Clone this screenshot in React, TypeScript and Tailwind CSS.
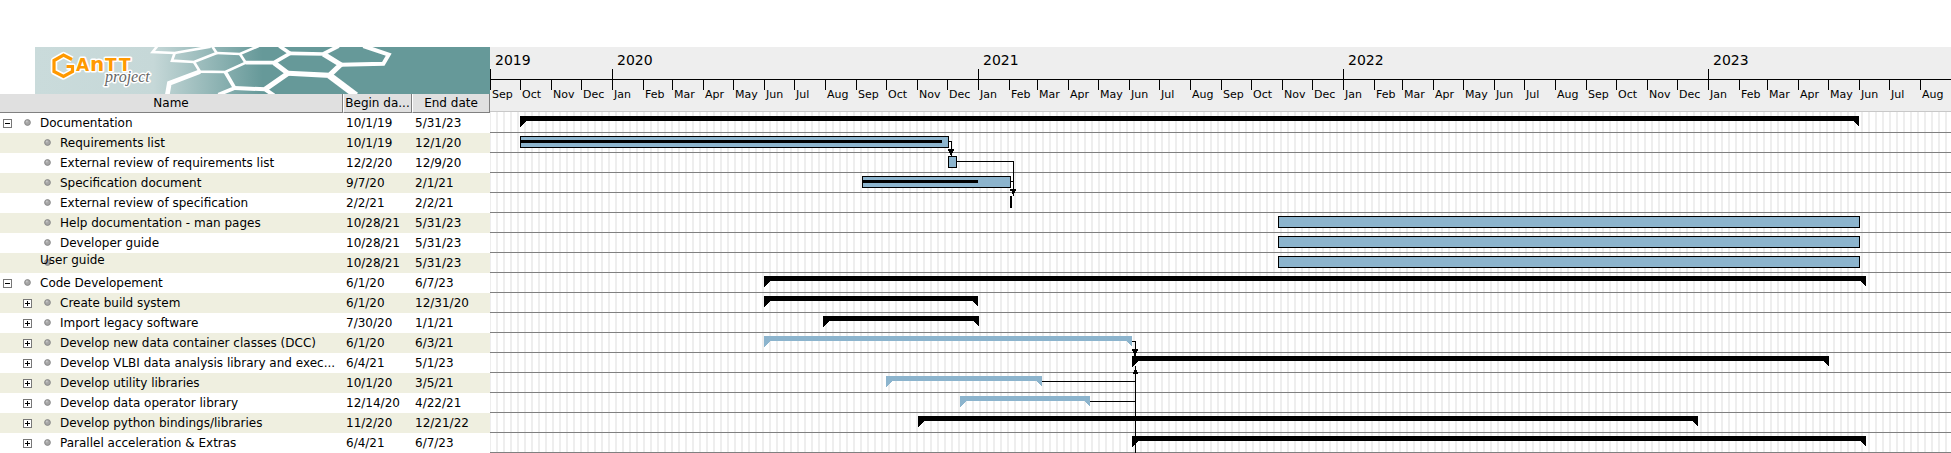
import React from "react";

const DAY = 86400000;
const START = Date.UTC(2019, 8, 1);
const MONTHS = ["Jan", "Feb", "Mar", "Apr", "May", "Jun", "Jul", "Aug", "Sep", "Oct", "Nov", "Dec"];
const ROW = 20;

type Kind = "summary" | "open" | "task";
type Task = {
  name: string;
  begin: string;
  end: string;
  level: 0 | 1;
  kind: Kind;
  expander?: "-" | "+";
  done?: number;
  editing?: boolean;
};

const TASKS: Task[] = [
  { name: "Documentation", begin: "10/1/19", end: "5/31/23", level: 0, kind: "summary", expander: "-" },
  { name: "Requirements list", begin: "10/1/19", end: "12/1/20", level: 1, kind: "task", done: 422 },
  { name: "External review of requirements list", begin: "12/2/20", end: "12/9/20", level: 1, kind: "task" },
  { name: "Specification document", begin: "9/7/20", end: "2/1/21", level: 1, kind: "task", done: 116 },
  { name: "External review of specification", begin: "2/2/21", end: "2/2/21", level: 1, kind: "task" },
  { name: "Help documentation - man pages", begin: "10/28/21", end: "5/31/23", level: 1, kind: "task" },
  { name: "Developer guide", begin: "10/28/21", end: "5/31/23", level: 1, kind: "task" },
  { name: "User guide", begin: "10/28/21", end: "5/31/23", level: 1, kind: "task", editing: true },
  { name: "Code Developement", begin: "6/1/20", end: "6/7/23", level: 0, kind: "summary", expander: "-" },
  { name: "Create build system", begin: "6/1/20", end: "12/31/20", level: 1, kind: "summary", expander: "+" },
  { name: "Import legacy software", begin: "7/30/20", end: "1/1/21", level: 1, kind: "summary", expander: "+" },
  { name: "Develop new data container classes (DCC)", begin: "6/1/20", end: "6/3/21", level: 1, kind: "open", expander: "+" },
  { name: "Develop VLBI data analysis library and exec...", begin: "6/4/21", end: "5/1/23", level: 1, kind: "summary", expander: "+" },
  { name: "Develop utility libraries", begin: "10/1/20", end: "3/5/21", level: 1, kind: "open", expander: "+" },
  { name: "Develop data operator library", begin: "12/14/20", end: "4/22/21", level: 1, kind: "open", expander: "+" },
  { name: "Develop python bindings/libraries", begin: "11/2/20", end: "12/21/22", level: 1, kind: "summary", expander: "+" },
  { name: "Parallel acceleration & Extras", begin: "6/4/21", end: "6/7/23", level: 1, kind: "summary", expander: "+" },
];

/** One day is one pixel wide. */
const dayOf = (date: string) => {
  const [m, d, y] = date.split("/").map(Number);
  return (Date.UTC(2000 + y, m - 1, d) - START) / DAY;
};

const months = Array.from({ length: 48 }, (_, i) => {
  const from = Date.UTC(2019, 8 + i, 1);
  const to = Date.UTC(2019, 9 + i, 1);
  return { key: i, label: MONTHS[(8 + i) % 12], days: (to - from) / DAY };
});

const years = [2019, 2020, 2021, 2022, 2023].map((y) => ({
  year: y,
  days: (Date.UTC(y + 1, 0, 1) - Math.max(START, Date.UTC(y, 0, 1))) / DAY,
}));

function Logo() {
  return (
    <svg viewBox="0 0 455 47" className="block h-[47px] w-[455px]" role="img" aria-label="GanttProject">
      <defs>
        <linearGradient id="banner" x1="0" x2="1" y1="0" y2="0">
          <stop offset="0" stopColor="#cadbdb" />
          <stop offset="0.26" stopColor="#c6d8d8" />
          <stop offset="0.5" stopColor="#669999" />
          <stop offset="1" stopColor="#669999" />
        </linearGradient>
      </defs>
      <rect width="455" height="47" fill="url(#banner)" />
      <g transform="scale(0.33333) translate(-105 -51)" fill="none" stroke="#fff">
        <g strokeWidth="8">
          <path d="M472 48L458 66L524 69L632 50" />
          <path d="M524 69L516 92L582 96L650 69L636 48" />
          <path d="M650 69L720 72L776 48" />
          <path d="M582 96L600 125L676 126L737 98L720 72" />
        </g>
        <g strokeWidth="11">
          <path d="M600 125L508 160L502 194" strokeWidth="14" />
          <path d="M676 126L704 174L655 194" />
          <path d="M737 98L822 98L870 70L838 48" />
          <path d="M870 70L970 72L1016 48" />
        </g>
        <g strokeWidth="15">
          <path d="M704 174L795 178L822 196" strokeWidth="12" />
          <path d="M822 98L864 130L795 178" />
          <path d="M864 130L988 136L1022 104L970 72" />
          <path d="M1022 104L1150 101L1166 74L1090 48" strokeWidth="12" />
          <path d="M988 136L1068 196" strokeWidth="20" />
        </g>
      </g>
      <path d="M37 12.500L28.500 8L19 13.500V24.500L28.500 29.500L37.500 24.500V19.500H31.500" fill="none" stroke="#fff" strokeWidth="6.500" strokeLinejoin="round" />
      <text
        x="41 55 70 84"
        y="24"
        fontFamily="'DejaVu Sans', sans-serif"
        fontWeight="700"
        fontSize="17"
        fill="#ff9900"
        stroke="#fff"
        strokeWidth="3"
        strokeLinejoin="round"
        paintOrder="stroke"
      >
        A<tspan fontSize="20">n</tspan>TT
      </text>
      <path d="M37 12.500L28.500 8L19 13.500V24.500L28.500 29.500L37.500 24.500V19.500H31.500" fill="none" stroke="#ff9900" strokeWidth="3.200" />
      <text
        x="70"
        y="35"
        fontFamily="'Liberation Serif', serif"
        fontStyle="italic"
        fontSize="16"
        fill="#666"
        stroke="#fff"
        strokeWidth="3"
        strokeLinejoin="round"
        paintOrder="stroke"
      >
        project
      </text>
    </svg>
  );
}

function Bullet() {
  return (
    <svg viewBox="0 0 7 7" className="block size-[7px] shrink-0" aria-hidden="true">
      <circle cx="3.5" cy="3.5" r="2.900" fill="#a6a6a6" stroke="#858585" strokeWidth="0.900" />
      <circle cx="2.800" cy="2.600" r="1" fill="#c6c6c6" />
    </svg>
  );
}

function Expander({ sign, name }: { sign: "-" | "+"; name: string }) {
  return (
    <button
      type="button"
      aria-label={(sign === "+" ? "Expand " : "Collapse ") + name}
      className="block size-[9px] shrink-0 border border-[#777] bg-white"
    >
      <svg viewBox="0 0 7 7" className="block size-[7px]" shapeRendering="crispEdges" aria-hidden="true">
        <path d={sign === "+" ? "M1 3h5v1h-5zM3 1h1v5h-1z" : "M1 3h5v1h-5z"} fill="#000" />
      </svg>
    </button>
  );
}

function NameCell({ task }: { task: Task }) {
  return (
    <div className={"relative flex h-5 items-center " + (task.level === 0 ? "pl-[3px]" : "pl-[23px]")}>
      <span className="flex w-[21px] shrink-0">
        {task.expander && <Expander sign={task.expander} name={task.name} />}
      </span>
      <span className="mb-px flex w-4 shrink-0">
        <Bullet />
      </span>
      {task.editing ? (
        <span className="absolute -top-[3px] left-10 leading-5">{task.name}</span>
      ) : (
        <span className="whitespace-nowrap leading-5">{task.name}</span>
      )}
    </div>
  );
}

function TaskTable() {
  const head = "h-[19px] border-b border-r border-[#808080] bg-[#e0e0e0] p-0 text-center font-normal";
  return (
    <table className="w-[490px] table-fixed border-separate border-spacing-0 whitespace-nowrap text-xs leading-4 text-black">
      <colgroup>
        <col className="w-[343px]" />
        <col className="w-[69px]" />
        <col className="w-[78px]" />
      </colgroup>
      <thead>
        <tr>
          <th scope="col" className={head}>Name</th>
          <th scope="col" className={head + " border-l border-l-white"}>Begin da...</th>
          <th scope="col" className={head + " border-l border-l-white"}>End date</th>
        </tr>
      </thead>
      <tbody>
        {TASKS.map((t) => (
          <tr key={t.name} className="even:bg-[#efefe0]">
            <td className="p-0">
              <NameCell task={t} />
            </td>
            <td className="py-0 pl-[3px] pr-0">{t.begin}</td>
            <td className="py-0 pl-[3px] pr-0">{t.end}</td>
          </tr>
        ))}
      </tbody>
    </table>
  );
}

function TimeScale() {
  return (
    <div className="border-b border-[#c8c8c8] bg-[#eeeeee] text-black">
      <div className="flex h-8 overflow-hidden">
        {years.map((y) => (
          <div key={y.year} className="flex shrink-0 flex-col justify-end" style={{ width: y.days }}>
            <span className="h-[18px] pl-[5px] text-sm leading-[18px]">{y.year}</span>
            <span className="h-[10px] w-px bg-black" />
          </div>
        ))}
      </div>
      <div className="flex h-8 overflow-hidden border-t border-black">
        {months.map((m) => (
          <div key={m.key} className="flex shrink-0 flex-col" style={{ width: m.days }}>
            <span className="h-[10px] w-px bg-black" />
            <span className="pl-[2px] text-[11px] leading-[9px]">{m.label}</span>
          </div>
        ))}
      </div>
    </div>
  );
}

function Bar({ task, row }: { task: Task; row: number }) {
  const x = dayOf(task.begin);
  const end = dayOf(task.end) + 1;
  const y = row * ROW + 4;
  if (task.kind === "task") {
    const w = end - x + 1;
    return (
      <g>
        <rect x={x} y={y} width={w} height={12} fill="#000" />
        {w > 2 && <rect x={x + 1} y={y + 1} width={w - 2} height={10} fill="#8cb4cd" />}
        {task.done && <rect x={x} y={y + 4} width={task.done} height={3} fill="#000" />}
      </g>
    );
  }
  return (
    <path
      d={`M${x} ${y}H${end}V${y + 11}L${end - 6} ${y + 5}H${x + 6}L${x} ${y + 11}Z`}
      fill={task.kind === "open" ? "#8cb4cd" : "#000"}
    />
  );
}

/** Dependency arrows between the bars. */
function Links() {
  return (
    <g fill="#000">
      <path d="M459 29h3v8h-1v-7h-2zM458 37h6v2h-1v2h-1v2h-2v-2h-1v-2h-1zM461 43h1v1h-1z" />
      <path d="M467 49h57v29h-1v-28h-56zM521 69h2v1h-2zM520 77h6v2h-1v2h-1v3h-1v-2h-1v-3h-2z" />
      <path d="M642 229h4v8h-1v-7h-3zM642 237h6v2h-1v2h-1v3h-2v-3h-1v-2h-1z" />
      <path d="M645 254h1v87h-1zM643 262v-2h1v-2h1v-2h1v2h1v2h1v2z" />
      <path d="M552 269h93v1h-93zM600 289h45v1h-45z" />
    </g>
  );
}

function Chart() {
  const height = TASKS.length * ROW + 1;
  return (
    <svg className="block w-full" height={height} shapeRendering="crispEdges" role="img" aria-label="Task schedule">
      <defs>
        <pattern id="weekends" x="6" y="0" width="7" height="8" patternUnits="userSpaceOnUse">
          <rect width="2" height="8" fill="#eeeeee" />
        </pattern>
      </defs>
      <rect width="100%" height={height} fill="url(#weekends)" />
      {TASKS.map((t, i) => (
        <rect key={t.name} x="0" y={(i + 1) * ROW} width="100%" height="1" fill="#808080" />
      ))}
      {TASKS.map((t, i) => (
        <Bar key={t.name} task={t} row={i} />
      ))}
      <Links />
    </svg>
  );
}

export default function App() {
  return (
    <main className="flex items-start overflow-hidden bg-white pt-[47px] font-['DejaVu_Sans',sans-serif]">
      <section className="w-[490px] shrink-0">
        <div className="pl-[35px]">
          <Logo />
        </div>
        <TaskTable />
      </section>
      <section className="min-w-0 flex-1">
        <TimeScale />
        <Chart />
      </section>
    </main>
  );
}
